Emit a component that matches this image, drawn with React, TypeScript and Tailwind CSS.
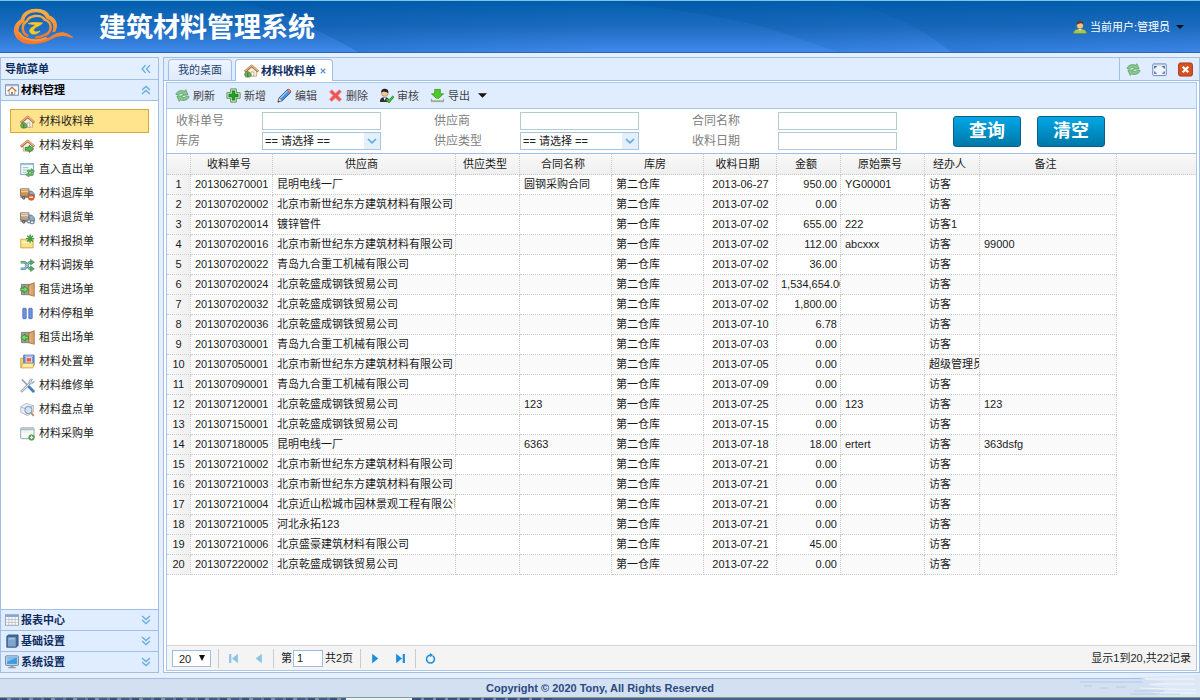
import React from "react";

type IconProps = { className?: string };

function Svg({ className = "w-[15px] h-[15px]", children }: { className?: string; children: React.ReactNode }) {
  return (
    <svg viewBox="0 0 16 16" className={`${className} shrink-0`} fill="none" aria-hidden="true">
      {children}
    </svg>
  );
}

/* ---------- icons ---------- */

function House({ arrow }: { arrow?: "in" | "out" | "none" }) {
  return (
    <Svg>
      <path d="M3.5 8v6h10V8L8.5 4z" fill="#f6efe2" stroke="#b58b62" strokeWidth=".7" />
      <path d="M7.5 9.5h3V14h-3z" fill="#fff" stroke="#a08060" strokeWidth=".6" />
      <path d="M.8 9.3 8.2 3l7 6.2" stroke="#b06a38" strokeWidth="2.600" strokeLinejoin="round" />
      <path d="M1.2 8.6 8.2 2.7l6.6 5.800" stroke="#e8b68c" strokeWidth="1.200" />
      {arrow === "out" ? (
        <path d="M5.5 10h4.2V7.8L14.6 11.6 9.7 15.4V13H5.5z" fill="#59b653" stroke="#2c7d30" strokeWidth=".8" />
      ) : (
        <>
          <path d="M.8 12.5c-.4-3 4-4.600 6-1.600 1.500 2 .6 4-1.500 4H2.500C1.500 14.900.8 13.800.8 12.500z" fill="#6fae55" stroke="#3d8237" strokeWidth=".8" />
          <path d="M4 10.500v4.700" stroke="#3b7a34" strokeWidth="1" />
        </>
      )}
    </Svg>
  );
}

function Recycle() {
  return (
    <Svg>
      <path d="M1 6.800C2 3.300 6.500 1.800 10.500 3.500l1-1.700 2.500 5.500-6 .6 1-1.600C6.800 5.500 4.800 5.800 3.800 7.600z" fill="#86c98a" stroke="#4a9553" strokeWidth=".7" />
      <path d="M15 9.300c-1 3.500-5.500 5-9.500 3.300l-1 1.700L2 8.800l6-.6-1 1.600c2.200.8 4.200.5 5.200-1.300z" fill="#86c98a" stroke="#4a9553" strokeWidth=".7" />
    </Svg>
  );
}

function AddIcon() {
  return (
    <Svg>
      <path d="M5 1h6v4h4v6h-4v4H5v-4H1V5h4z" fill="#eef7ec" stroke="#4b8a48" strokeWidth="1" strokeLinejoin="round" />
      <path d="M6.500 3h3v3.500H13v3H9.500V13h-3V9.500H3v-3h3.500z" fill="#23a022" stroke="#0c6d12" strokeWidth=".6" />
    </Svg>
  );
}

function Pencil() {
  return (
    <Svg>
      <path d="m1 15 1.200-4.500L11 1.800c1.500-1 4.300 1.500 3.400 3.200L5.500 13.600z" fill="#4a90e0" stroke="#1e4f9c" strokeWidth=".9" />
      <path d="m3.500 10.800 8-8" stroke="#a9d2fa" strokeWidth="1.200" />
      <path d="m1 15 1.200-4.500 3.300 3.100z" fill="#f7deb0" stroke="#8a6432" strokeWidth=".5" />
      <path d="m1 15 .6-2 1.400 1.300z" fill="#222" />
      <path d="M10.600 2.200 12 1.300c1.500-.3 3.200 1.600 2.600 3l-.9 1z" fill="#ef8a72" stroke="#a8442f" strokeWidth=".5" />
    </Svg>
  );
}

function Cross() {
  return (
    <Svg>
      <path d="M4 1.800 8 5.500l4-3.700 2.400 2.100L10.700 8l3.700 4-2.300 2.400L8 10.700l-4.100 3.600-2.400-2.200L5.300 8 1.600 4.200z" fill="#ef5350" stroke="#e89592" strokeWidth=".8" />
    </Svg>
  );
}

function Auditor() {
  return (
    <Svg>
      <path d="M1 14.800c0-3.800 2-5 5-5s5 1.200 5 5z" fill="#2e2e30" />
      <path d="m4.800 10 1.300 3.500L7.400 10z" fill="#fff" />
      <circle cx="6.200" cy="5.300" r="3.600" fill="#f0c795" stroke="#8a6135" strokeWidth=".5" />
      <path d="M2.500 5C2 1.500 4.500.6 6.600.8c2.600.2 4 2 3.200 4.400C8 4.500 6 4 5 3.800 4 4 3.300 4.300 2.500 5z" fill="#26221f" />
      <path d="m8.200 12 2.300 2.600 5-5.800" stroke="#1f7f22" strokeWidth="2.600" />
      <path d="m8.200 12 2.300 2.600 5-5.800" stroke="#43c542" strokeWidth="1.400" />
    </Svg>
  );
}

function Download() {
  return (
    <Svg>
      <path d="M5 1.500h6v4.700h3.500L8 12 1.500 6.200H5z" fill="#4fc92c" stroke="#2b9713" strokeWidth=".8" />
      <path d="M1.500 11.500v3h13v-3" fill="#e8eee6" stroke="#82937f" strokeWidth=".9" />
      <path d="M2 13.500h12" stroke="#a7b5a3" strokeWidth="1" />
    </Svg>
  );
}

function UserIcon() {
  return (
    <Svg className="w-[14px] h-[14px]">
      <path d="M.6 15.400c0-3.800 3-5.200 7.400-5.200s7.400 1.400 7.400 5.200z" fill="#a6c85a" stroke="#66862b" strokeWidth=".8" />
      <path d="m6 10.200 2 2.200 2-2.200z" fill="#f5e3cb" />
      <circle cx="8" cy="6.200" r="3.700" fill="#efc698" stroke="#9d7344" strokeWidth=".5" />
      <path d="M4 6C3.500 2.200 5.700.8 8 .8s4.500 1.400 4 5.200C11 4.800 10.500 4 9.500 3.800c-2 .5-4 .4-5.500 2.200z" fill="#5c4028" />
    </Svg>
  );
}

function FullScreen() {
  return (
    <Svg>
      <rect x=".8" y="2" width="14.400" height="12.500" rx="1" fill="#f1f5fb" stroke="#6d85ad" strokeWidth="1" />
      <path d="M.8 3h14.400" stroke="#a9bbd6" strokeWidth="1.200" />
      <path d="M3 7V5h2M11 5h2v2M13 10v2h-2M5 12H3v-2" stroke="#3d62a6" strokeWidth="1.300" />
    </Svg>
  );
}

function CloseBox() {
  return (
    <Svg>
      <rect x=".6" y="1" width="14.800" height="14" rx="2" fill="#d8501f" stroke="#a53a17" strokeWidth="1" />
      <path d="m5 5 6 6m0-6-6 6" stroke="#fff" strokeWidth="2.400" />
    </Svg>
  );
}

function FormSwap() {
  return (
    <Svg>
      <rect x=".8" y="1.500" width="13.500" height="12" fill="#f4f9fd" stroke="#6c9cba" strokeWidth=".9" />
      <path d="M1 2.500h13" stroke="#9fc6dd" strokeWidth="1.600" />
      <path d="M3 6h6M3 8.500h5M3 11h4" stroke="#8fc4b4" strokeWidth="1" />
      <path d="M8 8.500h4V7l3.500 2.700L12 12.200v-1.500H8z" fill="#66b567" stroke="#39873d" strokeWidth=".6" />
      <path d="M13.500 12.500h-4V11L6 13.500 9.500 16v-1.500h4z" fill="#66b567" stroke="#39873d" strokeWidth=".6" />
    </Svg>
  );
}

function Truck({ minus }: { minus?: boolean }) {
  return (
    <Svg>
      <path d="M.6 3h9v8h-9z" fill={minus ? "#c99356" : "#b9a684"} stroke="#77583a" strokeWidth=".8" />
      <path d="M1 4h8M1 6h8" stroke={minus ? "#f0cb95" : "#e5dac2"} strokeWidth="1.200" />
      <path d="M9.800 5.500h3l2.500 3v3.200H9.800z" fill="#8eb0cf" stroke="#4c6580" strokeWidth=".8" />
      <path d="M.6 11.200h14.600v1.300H.6z" fill="#6b6b6b" />
      <circle cx="4" cy="12.700" r="1.700" fill="#4a4a4a" />
      <circle cx="4" cy="12.700" r=".7" fill="#d8d8d8" />
      {minus ? (
        <>
          <circle cx="12" cy="12" r="3.300" fill="#e3602b" stroke="#b13f14" strokeWidth=".5" />
          <path d="M10 12h4" stroke="#fff" strokeWidth="1.300" />
        </>
      ) : (
        <>
          <rect x="7.500" y="10.500" width="4" height="3.200" rx="1.600" stroke="#77828c" strokeWidth="1.200" fill="#e6ebee" />
          <rect x="11" y="11.500" width="4" height="3.200" rx="1.600" stroke="#77828c" strokeWidth="1.200" fill="#e6ebee" />
        </>
      )}
    </Svg>
  );
}

function FolderStar() {
  return (
    <Svg>
      <path d="M.8 5.500h5l1.200 1.300h7v8H.8z" fill="#fbe28a" stroke="#cda030" strokeWidth=".9" />
      <path d="M2 9h11" stroke="#fff6cf" strokeWidth="1.500" />
      <path d="M10.800.6v8.800M6.400 5h8.800M7.700 1.900l6.200 6.200m0-6.200L7.700 8.100" stroke="#4b9d41" strokeWidth="1.700" />
    </Svg>
  );
}

function Shuffle() {
  return (
    <Svg>
      <path d="M.8 4.500h3.500c3.500 0 3 7 6.700 7h1" stroke="#3c8a52" strokeWidth="2.600" />
      <path d="M.8 11.500h3.500c3.500 0 3-7 6.700-7h1" stroke="#4c86b5" strokeWidth="2.600" />
      <path d="M.8 4.500h3.500c3.500 0 3 7 6.700 7h1" stroke="#8fd09a" strokeWidth="1.100" />
      <path d="M.8 11.500h3.500c3.500 0 3-7 6.700-7h1" stroke="#9cc6e6" strokeWidth="1.100" />
      <path d="M11.300 1.500v6l4-3zM11.300 8.500v6l4-3z" fill="#58ad62" stroke="#2d7a40" strokeWidth=".6" />
    </Svg>
  );
}

function Door({ out }: { out?: boolean }) {
  return (
    <Svg>
      <path d="M1.500 2.500h9v11h-9z" fill="#98a38e" stroke="#66715f" strokeWidth=".8" />
      <path d="M9.500 3 15.200.8v14.400L9.500 13.500z" fill="#d9a56a" stroke="#94632f" strokeWidth=".8" />
      <path d="M10.800 4v9" stroke="#eec391" strokeWidth="1" />
      {out ? (
        <path d="M9 6.500H5.500V4.200L.8 8l4.700 3.800V9.500H9z" fill="#7ad568" stroke="#2b7a2d" strokeWidth=".8" />
      ) : (
        <path d="M.8 6.500h3.500V4.200L9 8l-4.700 3.800V9.500H.8z" fill="#7ad568" stroke="#2b7a2d" strokeWidth=".8" />
      )}
    </Svg>
  );
}

function Pause() {
  return (
    <Svg>
      <rect x="3" y="2.500" width="3.600" height="11" rx=".5" fill="#6f93dd" stroke="#3d62b5" strokeWidth=".8" />
      <rect x="9.400" y="2.500" width="3.600" height="11" rx=".5" fill="#6f93dd" stroke="#3d62b5" strokeWidth=".8" />
    </Svg>
  );
}

function FolderPicture() {
  return (
    <Svg>
      <path d="M.8 4.500h4v10h-4z" fill="#f8d978" stroke="#c7982c" strokeWidth=".9" />
      <path d="M4 1.200h11v11H4z" fill="#6f94d8" stroke="#3b5da8" strokeWidth=".9" />
      <path d="M5 2.200h9" stroke="#c4d5f3" strokeWidth="1.200" />
      <rect x="6.500" y="4" width="6" height="4.500" fill="#e25a52" stroke="#fff" strokeWidth=".8" />
      <path d="m.8 14.800 2-5h12.400l-1.400 5z" fill="#fdeaa5" stroke="#c7982c" strokeWidth=".8" />
    </Svg>
  );
}

function Tools() {
  return (
    <Svg>
      <path d="m2 1.500 8 8.200" stroke="#97a5b3" strokeWidth="1.700" />
      <path d="m9.500 9.300 4.700 4.900" stroke="#3f7fc4" strokeWidth="3" strokeLinecap="round" />
      <path d="m2 14 8.500-8.500" stroke="#8796a5" strokeWidth="2.600" strokeLinecap="round" />
      <path d="m2 14 8.500-8.500" stroke="#dfe6ec" strokeWidth="1.200" strokeLinecap="round" />
      <path d="M13.300 1.200c-2.500-.4-4.300 1.800-3.300 4.300 1.600 1.500 4.800.7 5.200-2l-2.200 1-1-1.200z" fill="#d4dde5" stroke="#8796a5" strokeWidth=".8" />
    </Svg>
  );
}

function BoxSearch() {
  return (
    <Svg>
      <path d="M.8 5.200 6.500 1.500l7.700 2.300v7L8 14.500.8 11z" fill="#eceff3" stroke="#a0a9b5" strokeWidth=".8" />
      <path d="M.8 5.200 7.500 8l6.700-4.200M7.500 8v6" stroke="#a0a9b5" strokeWidth=".8" />
      <circle cx="9" cy="8.500" r="3.700" fill="#cfe3f6" fillOpacity=".85" stroke="#7b9dbf" strokeWidth="1.100" />
      <path d="m11.800 11.500 3 3.300" stroke="#c98b45" strokeWidth="2" />
    </Svg>
  );
}

function WindowAdd() {
  return (
    <Svg>
      <rect x=".7" y="2" width="14.300" height="11.500" rx=".8" fill="#fbfcfd" stroke="#8298a5" strokeWidth=".9" />
      <path d="M1 3.600h13.700" stroke="#a9bfc9" strokeWidth="2" />
      <path d="M2.500 6.500h9" stroke="#e2e8ec" strokeWidth="1" />
      <circle cx="12.300" cy="12.200" r="3" fill="#62b054" stroke="#37802e" strokeWidth=".6" />
      <path d="M10.600 12.200H14M12.300 10.500v3.400" stroke="#fff" strokeWidth="1.100" />
    </Svg>
  );
}

function HomeFrame() {
  return (
    <Svg className="w-[14px] h-[14px]">
      <rect x=".7" y="2" width="14.600" height="12" fill="#f7f9fb" stroke="#6a88b4" strokeWidth="1" />
      <path d="M1 3h14" stroke="#9fb9de" strokeWidth="1.400" />
      <path d="M4.800 8.500V13h6.400V8.500" fill="#fff" stroke="#a1886c" strokeWidth=".9" />
      <path d="M3 9.300 8 5l5 4.300" stroke="#c5733a" strokeWidth="1.500" />
      <path d="M7 10h2v3H7z" fill="#9a7a58" />
    </Svg>
  );
}

function TableIcon() {
  return (
    <Svg className="w-[14px] h-[14px]">
      <rect x=".6" y="2" width="14.800" height="12" fill="#fff" stroke="#8b9bb0" strokeWidth="1" />
      <path d="M1 3.300h14" stroke="#7ea6d8" strokeWidth="2.400" />
      <path d="M1 7.500h14M1 10.700h14M4.500 4.500V14M8 4.500V14M11.600 4.500V14" stroke="#b2b8bf" strokeWidth=".9" />
    </Svg>
  );
}

function BookIcon() {
  return (
    <Svg className="w-[14px] h-[14px]">
      <path d="M2 2.500 4 1h11v12l-2 2.200H2z" fill="#446b98" stroke="#2c4a70" strokeWidth=".8" />
      <path d="M3.300 3.800h9v10.400h-9z" fill="#7fa6cd" />
      <path d="M4.500 5.500h6.500" stroke="#c2d9ee" strokeWidth="1" />
    </Svg>
  );
}

function Monitor() {
  return (
    <Svg className="w-[14px] h-[14px]">
      <rect x=".7" y="1" width="14.600" height="10.800" rx=".8" fill="#d6dee8" stroke="#5c7391" strokeWidth="1" />
      <rect x="2.300" y="2.600" width="11.400" height="7.600" fill="#3d9be2" />
      <path d="M2.300 2.600h11.400L2.300 8z" fill="#7cc3f4" />
      <path d="M6.500 12h3v1.500h-3zM3.800 13.500h8.400V15H3.800z" fill="#8f9caa" />
    </Svg>
  );
}

function DoubleChevron({ dir }: { dir: "left" | "up" | "down" }) {
  const d =
    dir === "left"
      ? "M7.500 3.500 3.500 8l4 4.500M12.500 3.500 8.500 8l4 4.500"
      : dir === "up"
        ? "M3.500 8 8 4l4.500 4M3.500 12.500 8 8.500l4.500 4"
        : "M3.500 3.500 8 7.500l4.500-4M3.500 8 8 12l4.500-4";
  return (
    <Svg className="w-[14px] h-[14px]">
      <path d={d} stroke="#62ade4" strokeWidth="1.500" />
    </Svg>
  );
}

function Caret({ className = "w-[9px] h-[5px]" }: IconProps) {
  return (
    <svg viewBox="0 0 10 5" className={`${className} shrink-0`} aria-hidden="true">
      <path d="M0 0h10L5 5z" fill="#111" />
    </svg>
  );
}

function Logo() {
  return (
    <svg viewBox="38 24 184 112" className="h-[37px] w-[61px] shrink-0" fill="none" aria-hidden="true">
      <defs>
        <linearGradient id="flame" x1="0" y1="0" x2="0" y2="1">
          <stop offset="0" stopColor="#fbae45" />
          <stop offset="1" stopColor="#f2752b" />
        </linearGradient>
      </defs>
      <path
        d="M218 113c-22-18-42-17-58-6-14 10-27 14-41 15-30 3-62-3-66-27-1-14 4-23 17-31 1-18 18-30 39-29 17 1 27 8 31 20 18 5 26 22 19 40l6-1c9-20 2-39-18-46-6-13-20-20-39-20-25 0-43 13-45 31-14 8-22 20-21 37 4 29 37 41 74 34 20-3 33-11 47-18 16-8 33-7 55 1z"
        fill="url(#flame)"
        stroke="url(#flame)"
        strokeWidth="3.500"
      />
      <path d="M84 109c-20-8-23-35-4-45 5-18 43-23 54-4 23 6 23 37 2 45-9 5-20 8-31 8" stroke="url(#flame)" strokeWidth="7.500" />
      <path d="M84 71c12-5 28-3 43-2-4 9-25 12-27 21-1 7 11 8 19 4-8 13-32 12-31-2 1-10 17-12 18-17-7-1-14-1-22-4z" fill="#ffc81e" stroke="#ffc81e" strokeWidth="2" />
      <path d="M56 98c12 24 54 30 84 16" stroke="#f9983a" strokeWidth="6" />
    </svg>
  );
}

/* ---------- data ---------- */

const menu: [string, React.ReactNode][] = [
  ["材料收料单", <House />],
  ["材料发料单", <House arrow="out" />],
  ["直入直出单", <FormSwap />],
  ["材料退库单", <Truck minus />],
  ["材料退货单", <Truck />],
  ["材料报损单", <FolderStar />],
  ["材料调拨单", <Shuffle />],
  ["租赁进场单", <Door />],
  ["材料停租单", <Pause />],
  ["租赁出场单", <Door out />],
  ["材料处置单", <FolderPicture />],
  ["材料维修单", <Tools />],
  ["材料盘点单", <BoxSearch />],
  ["材料采购单", <WindowAdd />],
];

const tools: [string, React.ReactNode][] = [
  ["刷新", <Recycle />],
  ["新增", <AddIcon />],
  ["编辑", <Pencil />],
  ["删除", <Cross />],
  ["审核", <Auditor />],
  ["导出", <Download />],
];

const sections: [string, React.ReactNode][] = [
  ["报表中心", <TableIcon />],
  ["基础设置", <BookIcon />],
  ["系统设置", <Monitor />],
];

const headers = ["", "收料单号", "供应商", "供应类型", "合同名称", "库房", "收料日期", "金额", "原始票号", "经办人", "备注"];

const BJ = "北京市新世纪东方建筑材料有限公司";
const QD = "青岛九合重工机械有限公司";
const QS = "北京乾盛成钢铁贸易公司";

/* number, supplier, contract, warehouse, date, amount, ticket, handler, remark */
const rows: string[][] = [
  ["201306270001", "昆明电线一厂", "圆钢采购合同", "第二仓库", "2013-06-27", "950.00", "YG00001", "访客", ""],
  ["201307020002", BJ, "", "第二仓库", "2013-07-02", "0.00", "", "访客", ""],
  ["201307020014", "镀锌管件", "", "第一仓库", "2013-07-02", "655.00", "222", "访客1", ""],
  ["201307020016", BJ, "", "第一仓库", "2013-07-02", "112.00", "abcxxx", "访客", "99000"],
  ["201307020022", QD, "", "第一仓库", "2013-07-02", "36.00", "", "访客", ""],
  ["201307020024", QS, "", "第二仓库", "2013-07-02", "1,534,654.00", "", "访客", ""],
  ["201307020032", QS, "", "第二仓库", "2013-07-02", "1,800.00", "", "访客", ""],
  ["201307020036", QS, "", "第二仓库", "2013-07-10", "6.78", "", "访客", ""],
  ["201307030001", QD, "", "第二仓库", "2013-07-03", "0.00", "", "访客", ""],
  ["201307050001", BJ, "", "第二仓库", "2013-07-05", "0.00", "", "超级管理员", ""],
  ["201307090001", QD, "", "第一仓库", "2013-07-09", "0.00", "", "访客", ""],
  ["201307120001", QS, "123", "第一仓库", "2013-07-25", "0.00", "123", "访客", "123"],
  ["201307150001", QS, "", "第一仓库", "2013-07-15", "0.00", "", "访客", ""],
  ["201307180005", "昆明电线一厂", "6363", "第二仓库", "2013-07-18", "18.00", "ertert", "访客", "363dsfg"],
  ["201307210002", BJ, "", "第二仓库", "2013-07-21", "0.00", "", "访客", ""],
  ["201307210003", BJ, "", "第二仓库", "2013-07-21", "0.00", "", "访客", ""],
  ["201307210004", "北京近山松城市园林景观工程有限公司", "", "第二仓库", "2013-07-21", "0.00", "", "访客", ""],
  ["201307210005", "河北永拓123", "", "第二仓库", "2013-07-21", "0.00", "", "访客", ""],
  ["201307210006", "北京盛豪建筑材料有限公司", "", "第二仓库", "2013-07-21", "45.00", "", "访客", ""],
  ["201307220002", QS, "", "第一仓库", "2013-07-22", "0.00", "", "访客", ""],
];

/* ---------- parts ---------- */

function Header() {
  return (
    <header className="relative flex h-[53px] items-center border-t border-b border-t-[#7fc4e3] border-b-[#2767b8] bg-linear-to-b from-[#005fad] via-[#1b6cc0] to-[#3f88ea] pr-[16px] pl-[13px]">
      <svg className="absolute inset-0 h-full w-full" viewBox="0 0 1200 51" preserveAspectRatio="none" aria-hidden="true">
        <defs>
          <linearGradient id="shade" x1="0" y1="0" x2="1" y2="0">
            <stop offset="0" stopColor="#0353a4" stopOpacity=".4" />
            <stop offset="1" stopColor="#0353a4" stopOpacity="0" />
          </linearGradient>
          <linearGradient id="shadeSoft" x1="0" y1="0" x2="1" y2="0">
            <stop offset="0" stopColor="#0353a4" stopOpacity=".3" />
            <stop offset="1" stopColor="#0353a4" stopOpacity=".05" />
          </linearGradient>
        </defs>
        <path d="M234 0c40 8 80 26 124 51h240V0z" fill="url(#shade)" />
        <path d="M598 0c60 5 110 14 145 21 40 9 70 22 95 30h113C920 26 880 6 838 0z" fill="url(#shade)" />
        <path d="M838 0c42 6 82 26 113 51h249V0z" fill="url(#shadeSoft)" />
      </svg>
      <div className="relative flex flex-1 items-center">
        <Logo />
        <h1 className="ml-[25px] pt-[3px] text-[27px] leading-[36px] font-bold text-white">建筑材料管理系统</h1>
        <button className="ml-auto flex items-center gap-[3px] text-[11px] leading-[16px] text-white">
          <UserIcon />
          <span>当前用户:管理员</span>
          <Caret className="ml-[3px] h-[4px] w-[8px]" />
        </button>
      </div>
    </header>
  );
}

function Sidebar() {
  return (
    <aside className="flex w-[159px] shrink-0 flex-col border border-[#9fbfe9] bg-white text-[#0e2d5f]">
      <div className="flex h-[21px] items-center justify-between bg-[#e3eefe] pr-[5px] pl-[4px] font-bold">
        <h2>导航菜单</h2>
        <button aria-label="折叠">
          <DoubleChevron dir="left" />
        </button>
      </div>
      <button className="flex h-[22px] items-center gap-[2px] border-t border-b border-[#9fbfe9] bg-[#e0ecff] pr-[5px] pl-[4px] font-bold text-black">
        <HomeFrame />
        <span className="mr-auto">材料管理</span>
        <DoubleChevron dir="up" />
      </button>
      <nav className="flex-1 px-[9px] pt-[8px] text-[#222]">
        <ul>
          {menu.map(([label, icon], i) => (
            <li key={label}>
              <a
                href="#"
                className={
                  i === 0
                    ? "flex h-[24px] items-center gap-[4px] border border-[#d3a93a] bg-[#ffe48d] pl-[9px]"
                    : "flex h-[24px] items-center gap-[4px] border border-transparent pl-[9px]"
                }
              >
                {icon}
                <span>{label}</span>
              </a>
            </li>
          ))}
        </ul>
      </nav>
      {sections.map(([label, icon]) => (
        <button key={label} className="flex h-[21px] items-center gap-[2px] border-t border-[#9fbfe9] bg-[#e0ecff] pr-[5px] pl-[4px] font-bold">
          {icon}
          <span className="mr-auto">{label}</span>
          <DoubleChevron dir="down" />
        </button>
      ))}
    </aside>
  );
}

function TabBar() {
  return (
    <div className="flex h-[23px] items-end border-b border-[#9fbfe9] bg-[#e0ecff] pl-[4px]">
      <button className="mr-[3px] h-[21px] rounded-t-[4px] border border-b-0 border-[#9fbfe9] bg-linear-to-b from-[#eff5ff] to-[#dfebfe] px-[9px] text-[#26456f]">
        我的桌面
      </button>
      <div className="-mb-px flex h-[22px] items-center gap-[2px] rounded-t-[4px] border border-b-0 border-[#9fbfe9] bg-white pr-[4px] pl-[8px] font-bold text-[#0e2d5f]">
        <House />
        <button className="font-bold">材料收料单</button>
        <button aria-label="关闭" className="flex h-[10px] w-[10px] items-center justify-center">
          <svg viewBox="0 0 8 8" className="h-[6px] w-[6px]" aria-hidden="true">
            <path d="m1 1 6 6m0-6L1 7" stroke="#5f8fc9" strokeWidth="1.500" />
          </svg>
        </button>
      </div>
      <div className="ml-auto flex h-full items-center gap-[11px] border-l border-[#9fbfe9] pr-[6px] pl-[6px]">
        <button aria-label="刷新">
          <Recycle />
        </button>
        <button aria-label="全屏">
          <FullScreen />
        </button>
        <button aria-label="关闭全部">
          <CloseBox />
        </button>
      </div>
    </div>
  );
}

function Field({ id, label, select }: { id: string; label: string; select?: boolean }) {
  return (
    <div className="flex h-[18px] items-center">
      <label htmlFor={id} className="w-[86px] text-[12px] leading-[18px] text-[#808080]">
        {label}
      </label>
      {select ? (
        <span className="relative flex w-[119px]">
          <select id={id} className="h-[18px] w-full appearance-none border border-[#a9c5dc] bg-white pl-[2px] text-[11px] text-[#222]">
            <option>== 请选择 ==</option>
          </select>
          <span className="pointer-events-none absolute top-px right-px flex h-[16px] w-[16px] items-center justify-center bg-[#e3f0fc]">
            <svg viewBox="0 0 10 6" className="h-[6px] w-[10px]" fill="none" aria-hidden="true">
              <path d="m1 1 4 3.800L9 1" stroke="#5aa9e0" strokeWidth="1.600" />
            </svg>
          </span>
        </span>
      ) : (
        <input id={id} type="text" className="h-[18px] w-[119px] border border-[#b5cbd3] bg-white px-[3px] text-[11px]" />
      )}
    </div>
  );
}

function Filters() {
  const button =
    "h-[31px] w-[68px] rounded-[3px] border border-[#0b5f86] bg-linear-to-b from-[#00a7e6] to-[#0078a8] text-[18px] leading-[28px] font-bold text-white";
  return (
    <form className="flex items-center pt-[3px] pb-[3px] pl-[9px]">
      <div className="grid grid-cols-[repeat(3,max-content)] gap-x-[53px] gap-y-[2px]">
        <Field id="no" label="收料单号" />
        <Field id="supplier" label="供应商" />
        <Field id="contract" label="合同名称" />
        <Field id="store" label="库房" select />
        <Field id="kind" label="供应类型" select />
        <Field id="date" label="收料日期" />
      </div>
      <div className="ml-[56px] flex gap-[16px]">
        <button type="button" className={button}>
          查询
        </button>
        <button type="reset" className={button}>
          清空
        </button>
      </div>
    </form>
  );
}

const aligns = ["text-center", "", "", "", "", "", "text-center", "text-right", "", "", ""];

function Grid() {
  return (
    <div className="flex-1 overflow-x-hidden border-t border-[#9fc0e6]">
      <table className="w-full table-fixed border-separate border-spacing-0 text-[11px] leading-[19px] text-[#1a1a1a]">
        <colgroup>
          <col className="w-[24px]" />
          <col className="w-[82px]" />
          <col className="w-[183px]" />
          <col className="w-[64px]" />
          <col className="w-[92px]" />
          <col className="w-[92px]" />
          <col className="w-[73px]" />
          <col className="w-[64px]" />
          <col className="w-[84px]" />
          <col className="w-[55px]" />
          <col className="w-[137px]" />
          <col />
        </colgroup>
        <thead>
          <tr className="bg-linear-to-b from-[#f9f9f9] to-[#eeeeee]">
            {headers.map((h, i) => (
              <th key={i} className="h-[21px] border-r border-b border-dotted border-[#c9c9c9] py-0 pr-[5px] pl-0 text-center font-normal whitespace-nowrap">
                {h}
              </th>
            ))}
            <td className="border-b border-dotted border-[#c9c9c9] p-0" />
          </tr>
        </thead>
        <tbody>
          {rows.map((r, n) => {
            const cells = [String(n + 1), r[0], r[1], "", ...r.slice(2)];
            return (
              <tr key={r[0]}>
                {cells.map((c, i) => (
                  <td
                    key={i}
                    className={`h-[20px] overflow-hidden border-r border-b border-dotted border-[#cccccc] py-0 whitespace-nowrap ${aligns[i]} ${
                      i === 0 ? "bg-linear-to-r from-[#f9f9f9] to-[#efefef] px-0" : n % 2 ? "bg-[#fafafa] pr-[3px] pl-[4px]" : "pr-[3px] pl-[4px]"
                    }`}
                  >
                    {c}
                  </td>
                ))}
                <td className="p-0" />
              </tr>
            );
          })}
        </tbody>
      </table>
    </div>
  );
}

function PagerButton({ label, d, color }: { label: string; d: string; color: string }) {
  return (
    <button aria-label={label} className="flex h-[20px] w-[25px] items-center justify-center">
      <svg viewBox="0 0 10 10" className="h-[11px] w-[11px]" aria-hidden="true">
        <path d={d} fill={color} />
      </svg>
    </button>
  );
}

function Pager() {
  const sep = "h-[19px] w-px bg-[#cccccc]";
  return (
    <div className="flex h-[25px] items-center gap-[2px] border-t border-[#d5d5d5] bg-[#f4f4f4] pr-[5px] pl-[5px] text-[#222]">
      <span className="relative mr-[5px] flex">
        <select aria-label="每页条数" className="h-[17px] w-[39px] appearance-none border border-[#9dbde0] bg-white pl-[6px] text-[11px]">
          <option>20</option>
        </select>
        <svg viewBox="0 0 8 8" className="pointer-events-none absolute top-[5px] right-[6px] h-[6px] w-[6px]" aria-hidden="true">
          <path d="M0 0h8L4 8z" fill="#111" />
        </svg>
      </span>
      <span className={sep} />
      <div className="flex">
        <PagerButton label="首页" color="#8cc4e8" d="M1 1h2v8H1zM9 .6v8.800L3.600 5z" />
        <PagerButton label="上一页" color="#8cc4e8" d="M8 .6v8.800L2.500 5z" />
      </div>
      <span className={sep} />
      <label className="ml-[5px] flex items-center gap-px">
        第
        <input defaultValue="1" className="h-[17px] w-[30px] border border-[#9dbde0] bg-white pl-[3px] text-[11px]" />
      </label>
      <span className="mr-[5px]">共2页</span>
      <span className={sep} />
      <div className="flex">
        <PagerButton label="下一页" color="#1b8fdc" d="M2 .6v8.800L7.500 5z" />
        <PagerButton label="末页" color="#1b8fdc" d="M7 1h2v8H7zM1 .6v8.800L6.400 5z" />
      </div>
      <span className={sep} />
      <button aria-label="重新加载" className="flex h-[20px] w-[25px] items-center justify-center">
        <svg viewBox="0 0 12 12" className="h-[11px] w-[11px]" fill="none" aria-hidden="true">
          <path d="M8.500 3.100A4.300 4.300 0 1 1 3.500 3.100" stroke="#1b8fdc" strokeWidth="1.700" />
          <path d="M3.500 3.100A4.300 4.300 0 0 1 6 2.300" stroke="#1b8fdc" strokeWidth="1.700" />
          <path d="M5.500 0v4.600l3.300-2.300z" fill="#1b8fdc" />
        </svg>
      </button>
      <span className="ml-auto">显示1到20,共22记录</span>
    </div>
  );
}

export default function App() {
  return (
    <div className="flex min-h-screen flex-col bg-[#e6effa] font-['Liberation_Sans','Noto_Sans_CJK_SC',sans-serif] text-[11px] leading-[16px]">
      <Header />
      <div className="flex flex-1 gap-[4px] pt-[4px] pb-[5px]">
        <Sidebar />
        <main className="flex min-w-0 flex-1 flex-col border border-[#9fbfe9] bg-white">
          <TabBar />
          <section className="mx-[2px] mt-px mb-px flex flex-1 flex-col border border-[#a9c8ec]">
            <div className="flex h-[26px] items-center gap-[11px] border-b border-[#a9c8ec] bg-[#e0ecff] pl-[8px] text-[#444]">
              {tools.map(([label, icon]) => (
                <button key={label} className="flex items-center gap-[3px]">
                  {icon}
                  <span>{label}</span>
                  {label === "导出" && <Caret className="ml-[5px] h-[5px] w-[9px]" />}
                </button>
              ))}
            </div>
            <Filters />
            <Grid />
            <Pager />
          </section>
        </main>
      </div>
      <footer className="relative flex h-[19px] items-center justify-center border-t border-[#9fbfe9] bg-[#d2e0f2] font-bold text-[#2b4a80]">
        Copyright © 2020 Tony, All Rights Reserved
        <svg viewBox="0 0 130 22" className="absolute right-0 bottom-0 h-[22px] w-[130px]" fill="none" aria-hidden="true">
          <path d="M62 2 130 0v22H92l-12-6 18-3-22-3 20-3z" fill="#dce8f6" />
          <path d="M10 7h62M14 11h8M30 13h8M46 12h10M64 16h30M60 19h50" stroke="#b7cae4" strokeWidth="1" />
          <path d="M75 4h50M80 9h44M70 13l56 2M90 18h36" stroke="#eff5fc" strokeWidth="1" />
        </svg>
      </footer>
      <div className="flex h-[3px] border-t border-[#7fa08c] bg-[#4c6090]">
        <span className="w-[346px] bg-[repeating-linear-gradient(90deg,#3b4f80_0_7px,#8090b4_7px_11px,#465a8c_11px_19px,#6b7ca6_19px_22px)]" />
        <span className="w-[66px] bg-[#eef2f6]" />
        <span className="w-[140px] bg-[repeating-linear-gradient(90deg,#3b4f80_0_9px,#8090b4_9px_12px)]" />
      </div>
    </div>
  );
}
